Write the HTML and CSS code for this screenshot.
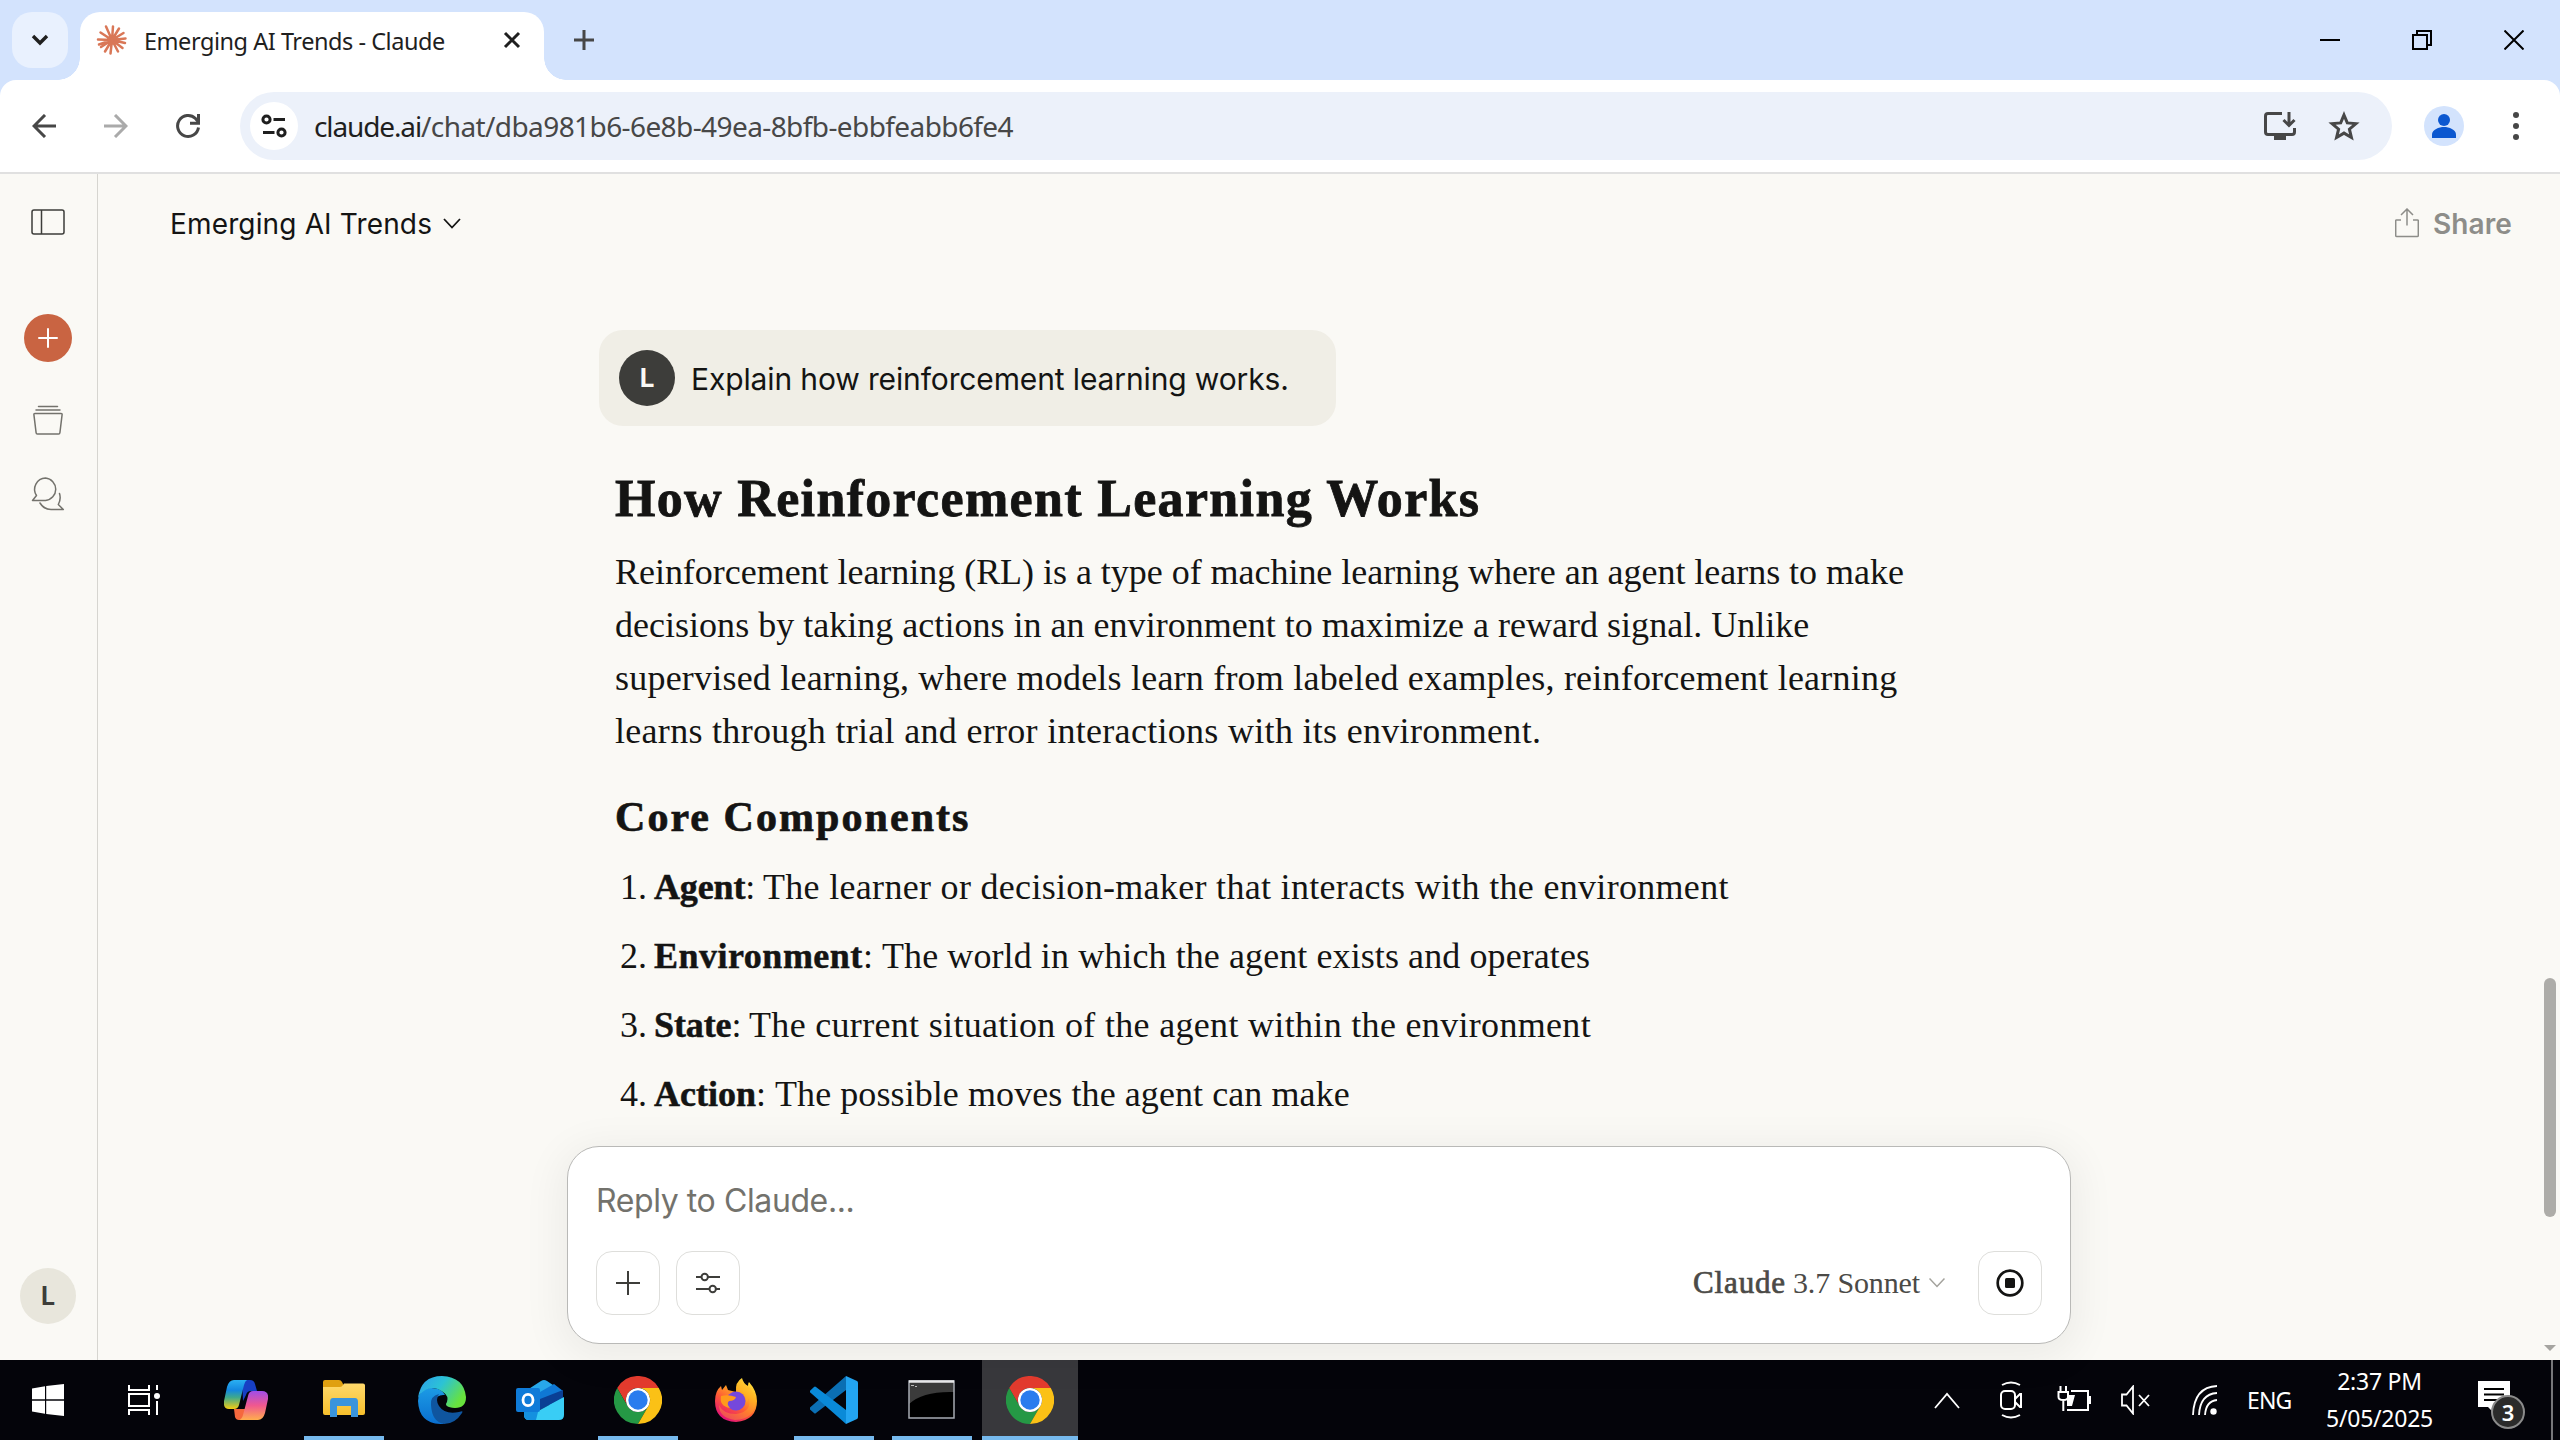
FILE: index.html
```html
<!DOCTYPE html>
<html lang="en">
<head>
<meta charset="utf-8">
<title>Emerging AI Trends - Claude</title>
<link rel="stylesheet" href="styles.css">
</head>
<body>
<div class="screen">
  <header class="tabstrip">
    <button class="tab-search"><svg width="18" height="12" viewBox="0 0 18 12"><path d="M2 2l7 7 7-7" fill="none" stroke="#1f1f1f" stroke-width="3.4"/></svg></button>
    <div class="tab">
      <svg class="favicon" width="32" height="32" viewBox="-16 -16 32 32" stroke="#d97757" stroke-width="2.5" stroke-linecap="round"><path d="M0 0L1 -13.5M0 0L7 -11.5M0 0L11.5 -7M0 0L13.5 -1.5M0 0L13 3M0 0L10.5 8M0 0L6 11.5M0 0L-1.5 13.5M0 0L-7 11.5M0 0L-11 7M0 0L-13 4.5M0 0L-14 -.5M0 0L-11.5 -7.5M0 0L-6 -13.5"/><circle r="3.500" fill="#d97757"/></svg>
      <span class="tab-title">Emerging AI Trends - Claude</span>
      <svg class="tab-close" width="18" height="18" viewBox="0 0 18 18"><path d="M2 2l14 14M16 2L2 16" stroke="#1f1f1f" stroke-width="3"/></svg>
    </div>
    <svg class="new-tab" width="20" height="20" viewBox="0 0 20 20"><path d="M10 0v20M0 10h20" stroke="#474747" stroke-width="3"/></svg>
    <div class="window-controls">
      <svg width="20" height="20" viewBox="0 0 20 20"><path d="M0 10h20" stroke="#000" stroke-width="2"/></svg>
      <svg width="20" height="20" viewBox="0 0 20 20" fill="none" stroke="#000" stroke-width="2"><path d="M1 5h14v14H1zM5 5V1h14v14h-4"/></svg>
      <svg width="20" height="20" viewBox="0 0 20 20"><path d="M.5.5l19 19M19.5.5l-19 19" stroke="#000" stroke-width="2"/></svg>
    </div>
  </header>

  <div class="toolbar-wrap">
  <nav class="toolbar">
    <svg class="nav-back" width="24" height="24" viewBox="0 0 24 24" fill="none" stroke="#474747" stroke-width="3"><path d="M24 12H2M13 1L2 12l11 11"/></svg>
    <svg class="nav-forward" width="24" height="24" viewBox="0 0 24 24" fill="none" stroke="#aaa" stroke-width="3"><path d="M0 12h22M11 1l11 11-11 11"/></svg>
    <svg class="nav-reload" width="26" height="26" viewBox="0 0 26 26" fill="none" stroke="#474747" stroke-width="3"><path d="M23.5 14.5A10.5 10.5 0 1 1 20.5 5.5L23 8.5"/><path d="M23.5 1v9.3H15"/></svg>
    <div class="omnibox">
      <span class="site-info"><svg width="26" height="24" viewBox="0 0 26 24" fill="none" stroke="#1f1f1f" stroke-width="3"><circle cx="5.5" cy="5.5" r="3.6"/><path d="M12.5 5.500H24M2 18.500H13.500"/><circle cx="20.500" cy="18.500" r="3.600"/></svg></span>
      <span class="url"><span class="url-host">claude.ai</span><span class="url-path">/chat/dba981b6-6e8b-49ea-8bfb-ebbfeabb6fe4</span></span>
      <svg class="install" width="32" height="28" viewBox="0 0 32 28" fill="none" stroke="#474747" stroke-width="3"><path d="M18 1.500H4Q1.500 1.500 1.500 4V20Q1.500 22.500 4 22.500H28Q30.500 22.500 30.500 20V16"/><path d="M25 0v13M19.500 8l5.500 5.500L30.500 8"/><path d="M10 25.500h12" stroke-width="5"/></svg>
      <svg class="star" width="32" height="30" viewBox="0 0 32 30" fill="none" stroke="#474747" stroke-width="3"><path d="M16 4l3.300 7.900 8.600.7-6.500 5.600 2 8.300-7.400-4.400-7.400 4.400 2-8.300-6.500-5.600 8.600-.7z"/></svg>
    </div>
    <span class="profile"><svg width="24" height="24" viewBox="0 0 24 24" fill="#0b57d0"><circle cx="12" cy="6" r="6"/><path d="M0 24v-3.500C0 15.500 7 13 12 13s12 2.500 12 7.500V24z"/></svg></span>
    <svg class="menu-dots" width="6" height="28" viewBox="0 0 6 28" fill="#474747"><circle cx="3" cy="3" r="3"/><circle cx="3" cy="14" r="3"/><circle cx="3" cy="25" r="3"/></svg>
  </nav>
  </div>

  <div class="page">
    <aside class="sidebar">
      <svg class="side-toggle" width="34" height="26" viewBox="0 0 34 26" fill="none" stroke="#3d3d3a" stroke-width="1.500"><rect x="1" y="1" width="32" height="24" rx="2"/><path d="M10.500 1v24"/></svg>
      <span class="new-chat"><svg width="20" height="20" viewBox="0 0 20 20"><path d="M10 1v18M1 10h18" stroke="#fff" stroke-width="2" stroke-linecap="round"/></svg></span>
      <svg class="side-projects" width="30" height="30" viewBox="0 0 30 30" fill="none" stroke="#73726c" stroke-width="1.500" stroke-linecap="round"><path d="M5.500 1.500h19M3 5h24M2 8.500h26q1.300 0 1.100 1.200l-2.200 18q-.1 1.300-1.300 1.300H4.400q-1.200 0-1.300-1.300L.9 9.700Q.7 8.500 2 8.500z"/></svg>
      <svg class="side-chats" width="34" height="34" viewBox="0 0 34 34" fill="none" stroke="#73726c" stroke-width="1.500" stroke-linejoin="round" stroke-linecap="round"><path d="M14.500 1a11.300 11.300 0 0 1 0 22.500H1.500l4-5A11.300 11.300 0 0 1 14.500 1z"/><path d="M28.500 16.500q1.800 5.500-1.200 11l5 5H20q-7 0-11-6.500"/></svg>
      <span class="side-avatar">L</span>
    </aside>

    <main class="chat">
      <header class="chat-header">
        <div class="chat-title"><span class="chat-name">Emerging AI Trends</span><svg width="18" height="11" viewBox="0 0 18 11"><path d="M1 1l8 8.500L17 1" fill="none" stroke="#141413" stroke-width="1.800"/></svg></div>
        <div class="share"><svg width="24" height="30" viewBox="0 0 24 30" fill="none" stroke="#8d8d89" stroke-width="1.500"><path d="M6 12H1.500q-.8 0-.8.8V27.500q0 1 1 1H22.300q1 0 1-1V12.800q0-.8-.8-.8H18M12 17.500V1M6 7l6-6 6 6"/></svg><span class="share-label">Share</span></div>
      </header>

      <div class="thread">
        <div class="user-message"><span class="avatar">L</span><span class="prompt">Explain how reinforcement learning works.</span></div>
        <article class="answer">
          <h2 class="h-main">How Reinforcement Learning Works</h2>
          <p class="para">
            <span class="line line-1">Reinforcement learning (RL) is a type of machine learning where an agent learns to make</span>
            <span class="line line-2">decisions by taking actions in an environment to maximize a reward signal. Unlike</span>
            <span class="line line-3">supervised learning, where models learn from labeled examples, reinforcement learning</span>
            <span class="line line-4">learns through trial and error interactions with its environment.</span>
          </p>
          <h3 class="h-sub">Core Components</h3>
          <ol class="components">
            <li class="item-agent"><span class="num">1.</span><span class="term"><b>Agent</b>:</span><span class="desc">The learner or decision-maker that interacts with the environment</span></li>
            <li class="item-environment"><span class="num">2.</span><span class="term"><b>Environment</b>:</span><span class="desc">The world in which the agent exists and operates</span></li>
            <li class="item-state"><span class="num">3.</span><span class="term"><b>State</b>:</span><span class="desc">The current situation of the agent within the environment</span></li>
            <li class="item-action"><span class="num">4.</span><span class="term"><b>Action</b>:</span><span class="desc">The possible moves the agent can make</span></li>
          </ol>
        </article>
      </div>

      <section class="composer">
        <div class="placeholder">Reply to Claude...</div>
        <div class="composer-row">
          <button class="tool"><svg width="24" height="26" viewBox="0 0 24 26"><path d="M12 1v24M0 13h24" stroke="#3d3d3a" stroke-width="2"/></svg></button>
          <button class="tool"><svg width="24" height="22" viewBox="0 0 24 22" fill="none" stroke="#3d3d3a" stroke-width="2"><path d="M0 5h5.500M12 5h12M0 17h13.500M20 17h4"/><circle cx="8.700" cy="5" r="3.200"/><circle cx="16.700" cy="17" r="3.200"/></svg></button>
          <div class="model"><span class="model-brand">Claude</span><span class="model-name">3.7 Sonnet</span><svg width="16" height="10" viewBox="0 0 16 10"><path d="M.5.500L8 8.500l7.500-8" fill="none" stroke="#a3a29c" stroke-width="1.500"/></svg></div>
          <button class="tool stop"><svg width="28" height="28" viewBox="0 0 28 28"><circle cx="14" cy="14" r="12.300" fill="none" stroke="#141413" stroke-width="2.700"/><rect x="9" y="9" width="10" height="10" rx="1.500" fill="#141413"/></svg></button>
        </div>
      </section>

      <div class="scrollbar"><div class="thumb"></div><svg width="12" height="6" viewBox="0 0 12 6"><path d="M0 0h12L6 6z" fill="#a5a4a0"/></svg></div>
    </main>
  </div>

  <footer class="taskbar">
    <svg width="0" height="0" class="defs"><defs>
      <linearGradient id="cpA" x1="0" y1="0" x2="0" y2="1"><stop offset="0" stop-color="#2ab0f2"/><stop offset=".35" stop-color="#1487e0"/><stop offset=".6" stop-color="#3fa98b"/><stop offset="1" stop-color="#f5cd12"/></linearGradient>
      <linearGradient id="cpB" x1="0" y1="0" x2="0" y2="1"><stop offset="0" stop-color="#a04de8"/><stop offset=".5" stop-color="#f0588f"/><stop offset="1" stop-color="#ffae4d"/></linearGradient>
      <linearGradient id="fold" x1="0" y1="0" x2="0" y2="1"><stop offset="0" stop-color="#ffd96b"/><stop offset="1" stop-color="#f7bf2c"/></linearGradient>
      <linearGradient id="edTop" x1="0" y1="0" x2="1" y2=".5"><stop offset="0" stop-color="#2b9df0"/><stop offset=".5" stop-color="#2cc3d5"/><stop offset="1" stop-color="#68e23d"/></linearGradient>
      <linearGradient id="edBlue" x1="0" y1="0" x2="0" y2="1"><stop offset="0" stop-color="#1c9be5"/><stop offset="1" stop-color="#0a6fd0"/></linearGradient>
      <linearGradient id="ffBody" x1=".9" y1="0" x2=".3" y2="1"><stop offset="0" stop-color="#fff04a"/><stop offset=".35" stop-color="#ffb01f"/><stop offset=".65" stop-color="#ff5a36"/><stop offset="1" stop-color="#e2107a"/></linearGradient>
      <symbol id="chrome" viewBox="0 0 48 48"><path d="M3.200 12A24 24 0 0 1 44.800 12H24A12 12 0 0 0 13.600 30z" fill="#e33b2e"/><path d="M3.200 12L13.600 30A12 12 0 0 0 34.400 30L24 48A24 24 0 0 1 3.200 12z" fill="#259845"/><path d="M44.800 12A24 24 0 0 1 24 48L34.400 30A12 12 0 0 0 24 12z" fill="#fbc116"/><circle cx="24" cy="24" r="12" fill="#fff"/><circle cx="24" cy="24" r="9.700" fill="#2a7cee"/></symbol>
    </defs></svg>
    <div class="apps">
      <span class="app app-start"><svg width="32" height="40" viewBox="0 0 32 40" fill="#fff"><path d="M0 8.500L13 6.200V19.200H0zM14.200 6L32 4v15.200H14.200zM0 20.800h13v13L0 31.500zM14.200 20.800H32V36L14.200 34z"/></svg></span>
      <span class="app app-view"><svg width="32" height="32" viewBox="0 0 32 32" fill="none" stroke="#fff" stroke-width="2"><path d="M1 1v5h20V1M1 31v-5h20v5M1 10h20v12H1zM29 1v5M29 17v14"/><circle cx="29" cy="12" r="3" fill="#fff" stroke="none"/></svg></span>
      <span class="app app-copilot"><svg width="44" height="40" viewBox="0 0 44 40"><path d="M18 0h8q4 0 5 4l2 7h-6q-4 0-5 4l-3 6z" fill="#173fc4"/><path d="M10 29h14l-4 7q-1 4-5 4-3 0-4-3z" fill="#f5683d"/><path d="M10 0h13q-2 1-3 5l-5 20q-1 4-5 4H5q-6 0-5-8L3 7q2-7 7-7z" fill="url(#cpA)"/><path d="M34 40H15q3-1 4-5l5-19q1-5 5-5h9q7 0 6 8l-3 14q-2 7-7 7z" fill="url(#cpB)"/></svg></span>
      <span class="app app-files running"><svg width="42" height="40" viewBox="0 0 42 40"><path d="M0 1q0-2 2-2h14q2 0 3 2l1.500 3H42v5H0z" transform="translate(0 1)" fill="#e0a010"/><path d="M0 7h17q2 0 3-2l1-1.500h19q2 0 2 2V33q0 2-2 2H2q-2 0-2-2z" fill="url(#fold)"/><path d="M7 37V22q0-4 3-4h22q3 0 3 4v15h-7V26H14v11z" fill="#3a94dc"/></svg></span>
      <span class="app app-edge"><svg width="48" height="48" viewBox="0 0 48 48"><path d="M0 25Q0 14 11 12q12-1 16 7-8-1-10 6-3 14 9 23Q1 49 0 25z" fill="url(#edBlue)"/><path d="M13 29q-1-9 8-11-4 6 0 12 6 9 20 6 5-2 3 1Q37 48 26 48 14 46 13 29z" fill="#0f559f"/><path d="M0 22Q3 0 24 0 46 1 48 21q0 11-11 11-12-1-8-6 2-6-4-10Q13 7 2 18z" fill="url(#edTop)"/></svg></span>
      <span class="app app-outlook"><svg width="48" height="40" viewBox="0 0 48 40"><path d="M8 12L25 1q3-2 6 0l15 10v14H8z" fill="#28a8ea"/><path d="M24 12L38 4l9 7v6L24 28z" fill="#0f78d4"/><path d="M24 19l23-9v8L24 30z" fill="#0a3f94"/><path d="M8 30h16l24-13v18q0 5-5 5H13q-5 0-5-5z" fill="#39cdf5"/><path d="M8 32h14l-2 8h-7q-5 0-5-5z" fill="#1490df"/><rect y="8" width="24" height="24" rx="2" fill="#0f7bd8"/><ellipse cx="12" cy="20" rx="5" ry="5.700" fill="none" stroke="#fff" stroke-width="2.800"/></svg></span>
      <span class="app app-chrome running"><svg width="48" height="48"><use href="#chrome"/></svg></span>
      <span class="app app-firefox"><svg width="42" height="44" viewBox="0 0 42 44"><path d="M21 14Q20 4 27 0q1 5 6 8 0-3 1-4 8 9 8 19Q42 42 21 44 0 43 0 23 0 13 6 8l1 4 4-5 2 5z" fill="url(#ffBody)"/><circle cx="21" cy="23" r="9.500" fill="#7548dc"/><path d="M6 18q7-2 15 1-1 4-7 4-3 3 1 7-11-2-9-12z" fill="#ff9a1c"/><path d="M22 12q10 1 9 13 2-2 3-5 3 14-13 16Q8 36 4 27q0 13 16 15 20-1 21-19-2-9-8-15-6-3-6-7-7 6-5 11z" fill="#ffb429" opacity=".35"/></svg></span>
      <span class="app app-code running"><svg width="48" height="48" viewBox="0 0 48 48"><path d="M36 0v14L6 37q-1 1-2 0l-4-3.500q-1-1 0-2z" fill="#0b6fb4"/><path d="M36 48V34L6 11q-1-1-2 0L.3 14.500q-1 1 0 2z" fill="#0a8ad8"/><path d="M36 0l11 5q1 .5 1 2v34q0 1.500-1 2l-11 5z" fill="#23a5f2"/></svg></span>
      <span class="app app-cmd running"><svg width="47" height="39" viewBox="0 0 47 39"><path d="M1 1h45v37H1z" fill="#000"/><path d="M1 2h45v10Q15 11 1 24z" fill="#3b3b3b"/><path d="M1 1h45v37H1z" fill="none" stroke="#a7abb3" stroke-width="1.500"/><path d="M1 1.500h45" stroke="#e8e8ea" stroke-width="2.500"/><path d="M3 5.500h3M7 6.500h2" stroke="#bbb"/></svg></span>
      <span class="app app-chrome2 running active"><svg width="48" height="48"><use href="#chrome"/></svg></span>
    </div>
    <div class="tray">
      <svg class="t-up" width="26" height="18" viewBox="0 0 26 18"><path d="M1 17L13 3l12 14" fill="none" stroke="#fff" stroke-width="1.800"/></svg>
      <svg class="t-meet" width="24" height="38" viewBox="0 0 24 38" fill="none" stroke="#fff" stroke-width="2"><path d="M3 4q9-5 18 0M3 34q9 5 18 0"/><rect x="2" y="10" width="14" height="18" rx="4"/><path d="M16 18l5-5h1v13h-1l-5-5"/></svg>
      <svg class="t-battery" width="34" height="28" viewBox="0 0 34 28" fill="none" stroke="#fff" stroke-width="2"><path d="M14 5h17v19H10M33 10v8"/><path d="M10 9h8l-3 11h-5z" fill="#fff" stroke="none"/><path d="M3.500 0v6M9 0v6M1.500 6h9.500v5q0 3-4.700 3-4.800 0-4.800-3zM6.300 14v11"/></svg>
      <svg class="t-volume" width="30" height="30" viewBox="0 0 30 30" fill="none" stroke="#fff" stroke-width="1.800"><path d="M1 9.500h4.500L12 1.500v27l-6.500-8H1zM18 10l10 11M28 10L18 21"/></svg>
      <svg class="t-wifi" width="26" height="32" viewBox="0 0 26 32" fill="none" stroke="#fff" stroke-width="1.800"><path d="M1 31Q2 3 25 2M7 31Q8 10 25 9M13 31q1-14 12-15"/><circle cx="21.500" cy="27.500" r="3.200" fill="#fff" stroke="none"/></svg>
      <span class="lang">ENG</span>
      <div class="clock"><span class="time">2:37 PM</span><span class="date">5/05/2025</span></div>
      <div class="notifications"><svg width="32" height="34" viewBox="0 0 32 34"><path d="M0 0h32v26H16l0 6-6-6H0z" fill="#fff"/><path d="M6 8h20M6 13.500h20M6 19h20" stroke="#000" stroke-width="2"/></svg><span class="badge">3</span></div>
      <span class="show-desktop"></span>
    </div>
  </footer>
</div>
</body>
</html>
```
FILE: styles.css
```css
* { box-sizing: border-box; }
body { margin: 0; font-family: Inter, "Liberation Sans", sans-serif; }
button { padding: 0; border: 0; background: none; }
svg { display: block; flex: none; }
.screen { width: 2560px; height: 1440px; display: flex; flex-direction: column; overflow: hidden; background: #faf9f5; }

/* browser chrome */
.tabstrip { height: 80px; flex: none; display: flex; align-items: flex-end; background: #d3e3fd; padding-left: 12px; }
.tab-search { width: 56px; height: 56px; margin-bottom: 12px; border-radius: 20px; background: #e9f1fe; display: flex; align-items: center; justify-content: center; }
.tab { position: relative; width: 464px; height: 68px; margin-left: 12px; padding: 0 20px 12px 16px; display: flex; align-items: center; background: #fff; border-radius: 20px 20px 0 0; }
.tab::before, .tab::after { content: ""; position: absolute; bottom: 0; width: 22px; height: 22px; }
.tab::before { left: -22px; background: radial-gradient(circle at 0 0, transparent 21.5px, #fff 22px); }
.tab::after { right: -22px; background: radial-gradient(circle at 100% 0, transparent 21.5px, #fff 22px); }
.tab-title { margin-left: 16px; flex: 1; padding-top: 2px; white-space: nowrap; font: 23.5px/36px "Noto Sans", sans-serif; letter-spacing: -.46px; color: #1f1f1f; }
.tab-close { margin-right: 3px; }
.new-tab { margin: 0 0 30px 30px; }
.window-controls { margin: 0 36px 30px auto; display: flex; gap: 72px; }
.toolbar-wrap { height: 94px; flex: none; background: #d3e3fd; }
.toolbar { height: 94px; display: flex; align-items: center; background: #fff; border-bottom: 2px solid #e0e0e0; border-radius: 16px 16px 0 0; padding-left: 32px; }
.nav-forward { margin-left: 48px; }
.nav-reload { margin-left: 47px; }
.omnibox { width: 2152px; height: 68px; margin-left: 39px; padding: 0 32px 0 10px; display: flex; align-items: center; border-radius: 34px; background: #ecf1fa; }
.site-info { width: 48px; height: 48px; border-radius: 50%; background: #fff; display: flex; align-items: center; justify-content: center; }
.url { margin-left: 16px; flex: 1; white-space: nowrap; font: 28px/40px "Noto Sans", sans-serif; color: #474747; letter-spacing: -.591px; }
.url-host { color: #1f1f1f; letter-spacing: -1.125px; }
.star { margin-left: 32px; }
.profile { width: 40px; height: 40px; margin-left: 32px; border-radius: 50%; background: #d3e3fd; display: flex; align-items: center; justify-content: center; }
.menu-dots { margin-left: 49px; }

/* page */
.page { flex: 1; display: flex; min-height: 0; }
.sidebar { width: 98px; border-right: 1px solid #d6d5d0; display: flex; flex-direction: column; align-items: center; padding: 35px 1px 36px 0; }
.new-chat { width: 48px; height: 48px; margin-top: 79px; border-radius: 50%; background: #c96442; display: flex; align-items: center; justify-content: center; }
.side-projects { margin-top: 43px; }
.side-chats { margin-top: 42px; }
.side-avatar { width: 56px; height: 56px; margin-top: auto; border-radius: 50%; background: #e8e6dc; color: #3d3d3a; font-size: 25px; font-weight: 700; line-height: 56px; text-align: center; }
.chat { position: relative; flex: 1; display: flex; flex-direction: column; padding-bottom: 16px; }
.chat-header { height: 98px; flex: none; display: flex; justify-content: space-between; align-items: center; padding: 0 48px 0 72px; }
.chat-title { display: flex; align-items: center; gap: 11px; font-size: 28px; color: #141413; white-space: nowrap; }
.chat-name { padding-top: 2px; letter-spacing: .15px; }
.share { display: flex; align-items: center; gap: 14px; font-size: 28px; font-weight: 600; color: #8d8d89; }
.share-label { padding-top: 1px; letter-spacing: .1px; }
.thread { flex: 1; padding: 58px 0 0 501px; }
.user-message { width: 737px; height: 96px; display: flex; align-items: center; gap: 16px; padding-left: 20px; border-radius: 24px; background: #f0eee6; color: #141413; font-size: 30px; white-space: nowrap; }
.prompt { padding-top: 1px; letter-spacing: -.13px; }
.avatar { width: 56px; height: 56px; flex: none; border-radius: 50%; background: #3d3d3a; color: #faf9f5; font-size: 26px; font-weight: 700; line-height: 56px; text-align: center; }
.answer { margin-left: 16px; padding-top: 43px; font-family: "Liberation Serif", serif; font-size: 36px; color: #141413; white-space: nowrap; }
.h-main { width: max-content; margin: 0 0 17px; font-size: 52px; line-height: 60px; letter-spacing: 1.33px; -webkit-text-stroke: .8px #141413; }
.para { margin: 0 0 34px; line-height: 53px; }
.line { display: block; }
.line-1 { letter-spacing: -.03px; }
.line-2 { letter-spacing: .02px; }
.line-3 { letter-spacing: .21px; }
.line-4 { letter-spacing: .3px; }
.h-sub { width: max-content; margin: 0 0 19px; font-size: 42px; line-height: 50px; letter-spacing: 2.05px; -webkit-text-stroke: .7px #141413; }
.components { list-style: none; margin: 0; padding: 0; display: flex; flex-direction: column; gap: 16px; line-height: 53px; }
.components li { display: flex; }
.num { width: 39px; padding-left: 5px; flex: none; }
.term { flex: none; margin-right: 8px; }
.term b { -webkit-text-stroke: .5px #141413; }
.item-agent .term { width: 101px; letter-spacing: -.15px; }
.item-agent .desc { letter-spacing: .31px; }
.item-environment .term { width: 220px; letter-spacing: .5px; }
.item-environment .desc { letter-spacing: .09px; }
.item-state .term { width: 87px; letter-spacing: -.1px; }
.item-state .desc { letter-spacing: .32px; }
.item-action .term { width: 113px; letter-spacing: 0; }
.item-action .desc { letter-spacing: .08px; }
.composer { width: 1504px; height: 198px; flex: none; margin-left: 469px; padding: 28px; border: 1px solid #b9b9b7; border-radius: 32px; background: #fff; box-shadow: 0 8px 40px 8px rgba(0, 0, 0, .055); }
.placeholder { height: 52px; font-size: 32px; line-height: 52px; letter-spacing: -.4px; color: #73726c; }
.composer-row { display: flex; align-items: center; gap: 16px; margin-top: 24px; }
.tool { width: 64px; height: 64px; flex: none; border: 1px solid #dededb; border-radius: 16px; display: flex; align-items: center; justify-content: center; }
.model { margin-left: auto; margin-right: 17px; display: flex; align-items: baseline; font-family: "Liberation Serif", serif; font-size: 30px; color: #4b4a47; }
.model-brand { margin-right: 7px; font-size: 31px; letter-spacing: .85px; -webkit-text-stroke: .7px #4b4a47; }
.model-name { letter-spacing: -.13px; }
.model svg { margin-left: 9px; align-self: center; }
.scrollbar { position: absolute; right: 4px; top: 804px; height: 373px; display: flex; flex-direction: column; justify-content: space-between; }
.thumb { width: 12px; height: 239px; border-radius: 6px; background: #adaca8; }

/* taskbar */
.taskbar { height: 80px; flex: none; display: flex; justify-content: space-between; background: #04040a; }
.defs { position: absolute; }
.apps { display: flex; }
.app { height: 80px; display: flex; align-items: center; justify-content: center; border-bottom: 4px solid transparent; padding-top: 4px; width: 80px; margin-right: 18px; }
.running { border-bottom-color: #76b9ed; }
.active { width: 96px; background-color: #38383c; }
.app-start { width: 96px; margin-right: 0; }
.app-view { width: 96px; margin-right: 14px; }
.app-cmd { margin-right: 10px; padding-right: 1px; padding-top: 2px; }
.tray { display: flex; align-items: center; color: #fff; font-family: "Noto Sans", sans-serif; font-size: 23px; }
.t-meet { margin-left: 39px; }
.t-battery { margin-left: 34px; }
.t-volume { margin-left: 30px; }
.t-wifi { margin-left: 41px; }
.lang { width: 45px; margin-left: 29px; letter-spacing: -.9px; }
.clock { width: 107px; margin-left: 34px; display: flex; flex-direction: column; align-items: center; line-height: 37px; white-space: nowrap; letter-spacing: -.25px; }
.notifications { position: relative; margin-left: 45px; padding-bottom: 4px; }
.badge { position: absolute; left: 13px; top: 14px; width: 34px; height: 34px; border: 2px solid #8b8b8b; border-radius: 50%; background: #2b2b2b; font-size: 22px; font-weight: 600; line-height: 30px; text-align: center; }
.show-desktop { width: 9px; height: 80px; margin-left: 41px; border-left: 2px solid #77777a; }
```
